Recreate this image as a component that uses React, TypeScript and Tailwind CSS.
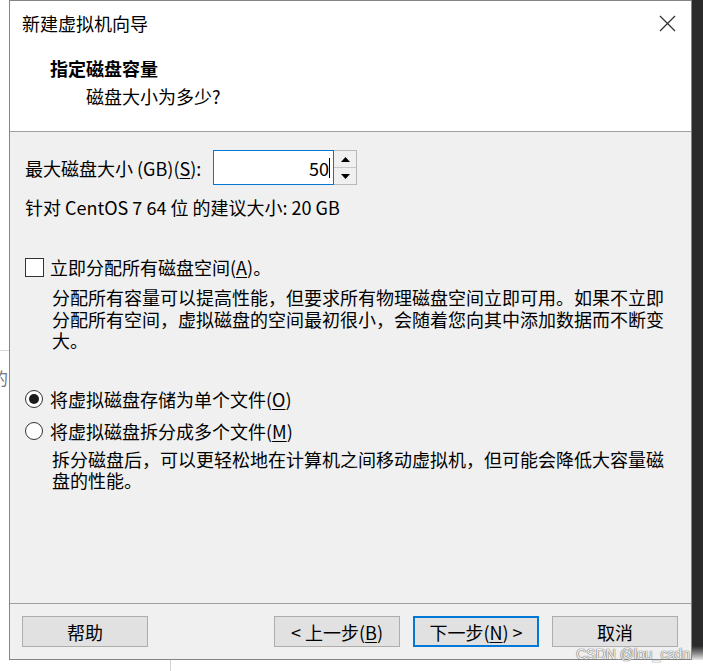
import React from "react";

const FONT = { fontFamily: '"Noto Sans CJK SC", "Noto Sans", sans-serif' };

function Btn({ children, primary }: { children: React.ReactNode; primary?: boolean }) {
  return (
    <div
      className={`flex h-[31px] w-[126px] items-center justify-center bg-[#e1e1e1] text-[18px] leading-[24px] text-black ${
        primary ? "border-2 border-[#0078d7]" : "border border-[#adadad]"
      }`}
    >
      {children}
    </div>
  );
}

function Radio({ checked }: { checked?: boolean }) {
  return (
    <div className="flex h-[18px] w-[18px] items-center justify-center rounded-full border border-[#333] bg-white">
      {checked && <div className="h-[10px] w-[10px] rounded-full bg-[#1a1a1a]" />}
    </div>
  );
}

export default function App() {
  return (
    <div className="relative h-[671px] w-[703px] overflow-hidden bg-white" style={FONT}>
      <div className="flex h-[660px]">
        {/* left outside strip */}
        <div className="flex w-[9px] flex-col overflow-hidden">
          <div className="h-[350px]" />
          <div className="h-px bg-[#d8d8d8]" />
          <div className="mt-[15px] -ml-[9px] text-[17px] leading-[24px] text-[#777]">的</div>
        </div>

        {/* dialog window */}
        <div className="flex h-[660px] w-[683px] flex-col border border-[#858585] bg-[#f0f0f0]">
          <div className="bg-white">
            <div className="flex h-[44px] items-center justify-between pl-[12px] pr-[15px]">
              <span className="text-[18px] leading-[24px] text-black">新建虚拟机向导</span>
              <svg width="17" height="17" viewBox="0 0 17 17">
                <path d="M1 1 L16 16 M16 1 L1 16" stroke="#333" strokeWidth="1.3" fill="none" />
              </svg>
            </div>
            <div className="pb-[23px] pl-[40px] pt-[11px]">
              <div className="text-[18px] font-bold leading-[24px] text-black">指定磁盘容量</div>
              <div className="mt-[4px] pl-[36px] text-[18px] leading-[24px] text-black">磁盘大小为多少?</div>
            </div>
          </div>
          <div className="h-px bg-[#a0a0a0]" />

          {/* body */}
          <div className="flex-1 pl-[15px] text-[18px] leading-[24px] text-black">
            <div className="mt-[18px] flex h-[35px] items-center">
              <div className="w-[188px]">
                最大磁盘大小 (GB)(<span className="underline underline-offset-2">S</span>):
              </div>
              <div className="flex h-[35px] w-[121px] items-center justify-end border border-[#0078d7] bg-white pr-[3px]">
                <span>50</span>
                <div className="h-[20px] w-px bg-black" />
              </div>
              <div className="flex h-[35px] w-[23px] flex-col border border-l-0 border-[#b8b8b8] bg-[#f0f0f0]">
                <div className="flex flex-1 items-center justify-center border-b border-[#c8c8c8]">
                  <svg width="9" height="5" viewBox="0 0 9 5">
                    <path d="M0 5 L4.5 0 L9 5 Z" fill="#000" />
                  </svg>
                </div>
                <div className="flex flex-1 items-center justify-center">
                  <svg width="9" height="5" viewBox="0 0 9 5">
                    <path d="M0 0 L4.5 5 L9 0 Z" fill="#000" />
                  </svg>
                </div>
              </div>
            </div>

            <div className="mt-[10px]">针对 CentOS 7 64 位 的建议大小: 20 GB</div>

            <div className="mt-[36px] flex items-center">
              <div className="h-[19px] w-[19px] border border-[#333] bg-white" />
              <span className="ml-[6px]">
                立即分配所有磁盘空间(<span className="underline underline-offset-2">A</span>)。
              </span>
            </div>
            <div className="ml-[27px] mt-[8px] w-[630px] leading-[21.5px]">
              分配所有容量可以提高性能，但要求所有物理磁盘空间立即可用。如果不立即
              <br />
              分配所有空间，虚拟磁盘的空间最初很小，会随着您向其中添加数据而不断变
              <br />
              大。
            </div>

            <div className="mt-[31px] flex h-[32px] items-center">
              <Radio checked />
              <span className="ml-[7px]">
                将虚拟磁盘存储为单个文件(<span className="underline underline-offset-2">O</span>)
              </span>
            </div>
            <div className="flex h-[32px] items-center">
              <Radio />
              <span className="ml-[7px]">
                将虚拟磁盘拆分成多个文件(<span className="underline underline-offset-2">M</span>)
              </span>
            </div>
            <div className="ml-[27px] mt-[2px] w-[630px] leading-[21.5px]">
              拆分磁盘后，可以更轻松地在计算机之间移动虚拟机，但可能会降低大容量磁
              <br />
              盘的性能。
            </div>
          </div>

          {/* footer */}
          <div className="flex items-center justify-between border-t border-[#a0a0a0] py-[12px] pl-[12px] pr-[13px]">
            <Btn>帮助</Btn>
            <div className="flex gap-[13px]">
              <Btn>
                &lt; 上一步(<span className="underline underline-offset-2">B</span>)
              </Btn>
              <Btn primary>
                下一步(<span className="underline underline-offset-2">N</span>) &gt;
              </Btn>
              <Btn>取消</Btn>
            </div>
          </div>
        </div>

        {/* right outside dark strip */}
        <div className="flex w-[11px] flex-col">
          <div className="flex-1 bg-[#2b2b2b]" />
          <div className="h-[14px] bg-gradient-to-b from-[#2b2b2b] to-[#e8e8e8]" />
        </div>
      </div>

      {/* below window */}
      <div className="flex h-[11px]">
        <div className="ml-[170px] w-px bg-[#d4d4d4]" />
      </div>

      {/* watermark */}
      <div
        className="absolute right-[13px] top-[645px] text-[14px] leading-[18px] text-[#f4f4f4]"
        style={{ fontFamily: '"Liberation Sans", Arial, sans-serif', textShadow: "0 0 1px #555, 0 0 1px #555" }}
      >
        CSDN @lou_csdn
      </div>
    </div>
  );
}
